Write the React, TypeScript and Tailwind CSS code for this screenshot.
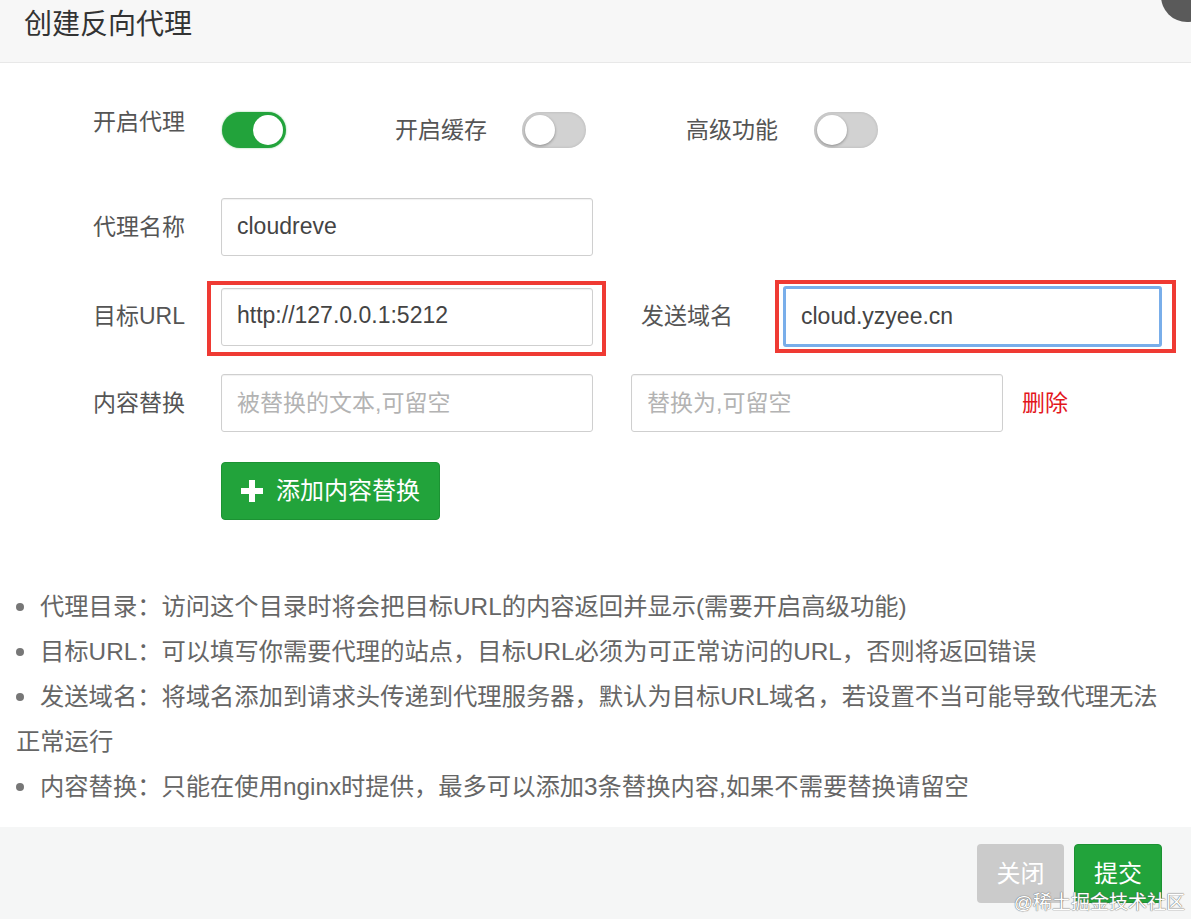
import React from "react";

function Toggle({ on }: { on: boolean }) {
  return (
    <div
      className={
        on
          ? "relative w-[64px] h-[36px] rounded-full bg-[#22a33b] shadow-[0_0_2px_rgba(34,163,59,0.6)]"
          : "relative w-[64px] h-[36px] rounded-full bg-[#d2d2d2] shadow-[inset_0_0_3px_rgba(0,0,0,0.15)]"
      }
    >
      <div
        className={
          on
            ? "absolute top-[3px] right-[3px] w-[30px] h-[30px] rounded-full bg-white"
            : "absolute top-[3px] left-[3px] w-[30px] h-[30px] rounded-full bg-white shadow-[0_1px_3px_rgba(0,0,0,0.35)]"
        }
      />
    </div>
  );
}

function TextInput({
  value,
  placeholder,
  width,
}: {
  value?: string;
  placeholder?: string;
  width: string;
}) {
  return (
    <div
      className={`${width} h-[58px] flex items-center pl-[15px] bg-white border border-[#cfcfcf] rounded-[3px] shadow-[inset_0_1px_1px_rgba(0,0,0,0.06)]`}
    >
      {value ? (
        <span className="text-[23px] leading-[30px] -mt-[3px] text-[#444]">{value}</span>
      ) : (
        <span className="text-[23px] text-[#b3b3b3]">{placeholder}</span>
      )}
    </div>
  );
}

export default function App() {
  return (
    <div className="relative w-[1191px] h-[919px] overflow-hidden bg-white font-['Liberation_Sans','Noto_Sans_CJK_SC',sans-serif]">
      {/* header */}
      <div className="h-[63px] bg-[#f7f7f7] border-b border-[#e8e8e8] pl-[24px] pt-[6px]">
        <div className="text-[28px] leading-[38px] text-[#333]">创建反向代理</div>
      </div>
      <div className="absolute -top-[30px] -right-[22px] w-[52px] h-[52px] rounded-full bg-[#5a5a5a]" />

      {/* form */}
      <div className="pl-[93px] text-[23px] text-[#555]">
        <div className="mt-[49px] h-[36px] flex items-center">
          <div className="w-[129px] mb-[16px]">开启代理</div>
          <Toggle on />
          <div className="ml-[109px] w-[127px]">开启缓存</div>
          <Toggle on={false} />
          <div className="ml-[100px] w-[128px]">高级功能</div>
          <Toggle on={false} />
        </div>

        <div className="mt-[50px] flex items-center">
          <div className="w-[128px]">代理名称</div>
          <TextInput value="cloudreve" width="w-[372px]" />
        </div>

        <div className="mt-[30px] flex items-center">
          <div className="w-[128px]">目标URL</div>
          <div className="relative">
            <TextInput value="http://127.0.0.1:5212" width="w-[372px]" />
            <span className="absolute -left-[14px] -top-[7px] -right-[13px] -bottom-[10px] border-[4px] border-[#ef3a33]" />
          </div>
          <div className="ml-[48px] w-[142px]">发送域名</div>
          <div className="relative">
            <div className="w-[379px] h-[61px] flex items-center pl-[15px] bg-white border-[3px] border-[#79aeea] rounded-[3px]">
              <span className="text-[23px] leading-[30px] -mt-[2px] text-[#444]">cloud.yzyee.cn</span>
            </div>
            <span className="absolute -left-[8px] -top-[6px] -right-[14px] -bottom-[6px] border-[4px] border-[#ef3a33]" />
          </div>
        </div>

        <div className="mt-[27px] flex items-center">
          <div className="w-[128px]">内容替换</div>
          <TextInput placeholder="被替换的文本,可留空" width="w-[372px]" />
          <div className="ml-[38px]">
            <TextInput placeholder="替换为,可留空" width="w-[372px]" />
          </div>
          <div className="ml-[19px] text-[#e3161c]">删除</div>
        </div>

        <div className="mt-[30px] ml-[128px] w-[219px] h-[58px] flex items-center pl-[19px] bg-[#22a33b] border border-[#1c9233] rounded-[4px] text-white text-[24px]">
          <svg width="22" height="22" viewBox="0 0 22 22" className="mr-[13px]">
            <rect x="8" y="0" width="6" height="22" fill="#fff" />
            <rect x="0" y="8" width="22" height="6" fill="#fff" />
          </svg>
          <span>添加内容替换</span>
        </div>
      </div>

      {/* notes */}
      <div className="mt-[64px] pl-[16px] pb-[18px] text-[24.3px] leading-[45px] text-[#666] whitespace-nowrap">
        <div className="flex items-center">
          <span className="inline-block w-[8px] h-[8px] rounded-full bg-[#777] mr-[16px]" />
          代理目录：访问这个目录时将会把目标URL的内容返回并显示(需要开启高级功能)
        </div>
        <div className="flex items-center">
          <span className="inline-block w-[8px] h-[8px] rounded-full bg-[#777] mr-[16px]" />
          目标URL：可以填写你需要代理的站点，目标URL必须为可正常访问的URL，否则将返回错误
        </div>
        <div className="flex items-center">
          <span className="inline-block w-[8px] h-[8px] rounded-full bg-[#777] mr-[16px]" />
          发送域名：将域名添加到请求头传递到代理服务器，默认为目标URL域名，若设置不当可能导致代理无法
        </div>
        <div>正常运行</div>
        <div className="flex items-center">
          <span className="inline-block w-[8px] h-[8px] rounded-full bg-[#777] mr-[16px]" />
          内容替换：只能在使用nginx时提供，最多可以添加3条替换内容,如果不需要替换请留空
        </div>
      </div>

      {/* footer */}
      <div className="h-[93px] bg-[#f5f6f6] flex justify-end items-start pt-[17px] pr-[29px] gap-[10px]">
        <div className="w-[87px] h-[59px] rounded-[4px] bg-[#cbcbcb] text-white text-[24px] flex items-center justify-center">
          关闭
        </div>
        <div className="w-[88px] h-[59px] rounded-[4px] bg-[#22a33b] border border-[#1c9233] text-white text-[24px] flex items-center justify-center">
          提交
        </div>
      </div>
      <div className="absolute right-[6px] bottom-[2px] text-[19px] leading-[28px] text-white [text-shadow:0_0_1px_#666,0_0_1px_#666]">
        @稀土掘金技术社区
      </div>
    </div>
  );
}
